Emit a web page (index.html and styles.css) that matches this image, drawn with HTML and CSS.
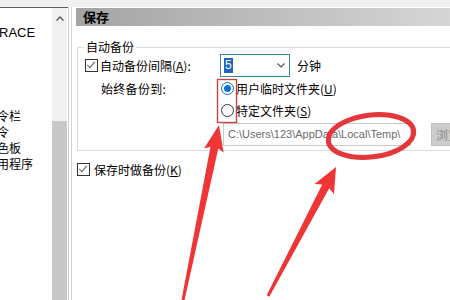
FILE: index.html
```html
<!DOCTYPE html>
<html>
<head>
    <meta charset="utf-8">
    <title>选项 - 保存</title>
    <link rel="stylesheet" href="styles.css">
</head>
<body>
    <div class="window">
        <div class="tree">
            <div class="tree-list">
                <div class="tree-item tree-item-first">RACE</div>
                <div class="tree-item"></div>
                <div class="tree-item"></div>
                <div class="tree-item"></div>
                <div class="tree-item tree-gap"></div>
                <div class="tree-item">令栏</div>
                <div class="tree-item">令</div>
                <div class="tree-item">色板</div>
                <div class="tree-item">用程序</div>
            </div>
            <div class="scrollbar">
                <div class="scroll-up">
                    <svg width="8" height="5" viewBox="0 0 8 5"><path d="M0.5 4.5 L4 1 L7.5 4.5" fill="none" stroke="#555" stroke-width="1.3"/></svg>
                </div>
                <div class="scroll-thumb"></div>
            </div>
        </div>
        <div class="divider"></div>

        <div class="page">
            <div class="page-title">保存</div>

            <div class="group">
                <div class="group-title">自动备份</div>
                <div class="group-grid">
                    <label class="check">
                        <span class="checkbox checked"></span>
                        <span>自动备份间隔(<u>A</u>):</span>
                    </label>
                    <div class="combo-row">
                        <div class="combo">
                            <span class="combo-value">5</span>
                            <svg class="combo-arrow" width="8" height="5" viewBox="0 0 8 5"><path d="M0.5 0.5 L4 4 L7.5 0.5" fill="none" stroke="#555" stroke-width="1.2"/></svg>
                        </div>
                        <span class="unit">分钟</span>
                    </div>

                    <div class="field-label">始终备份到:</div>
                    <label class="radio-row">
                        <span class="radio selected"></span>
                        <span>用户临时文件夹(<u>U</u>)</span>
                    </label>

                    <div></div>
                    <label class="radio-row">
                        <span class="radio"></span>
                        <span>特定文件夹(<u>S</u>)</span>
                    </label>

                    <div></div>
                    <div class="path-row">
                        <div class="path-box">C:\Users\123\AppData\Local\Temp\</div>
                        <button class="browse" disabled>浏览...</button>
                    </div>
                </div>
            </div>

            <label class="check save-check">
                <span class="checkbox checked"></span>
                <span>保存时做备份(<u>K</u>)</span>
            </label>
        </div>

        <!-- red annotations drawn on top of the screenshot -->
        <svg class="marks" width="450" height="300" viewBox="0 0 450 300">
            <rect x="217.5" y="79.5" width="19" height="43" fill="none" stroke="#c8453f" stroke-width="1.4"/>
            <ellipse cx="371" cy="136" rx="43" ry="21" transform="rotate(-7 371 136)" fill="none" stroke="#e5373b" stroke-width="5"/>
            <polygon points="219,125 223.6,152.5 218.3,148.4 184.5,300.3 181.5,299.7 210.5,146.8 204,148.5" fill="#ef3535"/>
            <polygon points="336,167 334,194.2 329.2,188.3 269.3,296.7 266.7,295.3 322.2,184.5 314.6,184" fill="#ef3535"/>
        </svg>
    </div>
</body>
</html>
```

FILE: styles.css
```css
/* General */
body, html {
    margin: 0;
    padding: 0;
    width: 450px;
    height: 300px;
    overflow: hidden;
    background-color: #f0f0f0;
    font-family: 'Noto Sans CJK SC', 'Noto Sans', sans-serif;
    font-size: 12px;
    color: #000000;
}
u {
    text-decoration: underline;
    text-underline-offset: 1px;
}
/* Window */
.window {
    position: relative;
    display: flex;
    height: 293px;
    margin-top: 7px;
}
/* Left tree with scrollbar */
.tree {
    display: flex;
    flex-shrink: 0;
    width: 68px;
    border-top: 1px solid #5c5c5c;
    background-color: #ffffff;
}
.tree-list {
    width: 52px;
    overflow: hidden;
    padding-top: 17px;
}
.tree-item {
    height: 16px;
    line-height: 16px;
    white-space: nowrap;
    margin-left: -3px;
}
.tree-gap {
    height: 19px;
}
.tree-item-first {
    margin-left: -1px;
    font-family: 'Liberation Sans', sans-serif;
    font-size: 13px;
}
.scrollbar {
    width: 15px;
    flex-shrink: 0;
    display: flex;
    flex-direction: column;
    background-color: #f0f0f0;
}
.scroll-up {
    height: 20px;
    display: flex;
    justify-content: center;
    align-items: center;
}
.scroll-thumb {
    margin-top: 93px;
    flex: 1;
    background-color: #c8c8c8;
}
.divider {
    flex-shrink: 0;
    width: 2px;
    border-left: 1px solid #cfcfcf;
    background-color: #ffffff;
}
/* Right page */
.page {
    flex: 1;
    min-width: 0;
    overflow: hidden;
    border-left: 1px solid #d4d4d4;
    background-color: #ffffff;
    padding-left: 4px;
}
.page-title {
    height: 18px;
    line-height: 18px;
    padding-left: 7px;
    margin-top: 1px;
    font-size: 13px;
    font-weight: bold;
    background: linear-gradient(to right, #a4a4a4, #d6d6d6);
}
/* Group box */
.group {
    margin-top: 21px;
    margin-left: 1px;
    border: 1px solid #dcdcdc;
    border-right: none;
    padding: 0 0 7px 7px;
}
.group-title {
    width: fit-content;
    height: 16px;
    line-height: 16px;
    margin: -9px 0 -1px -1px;
    padding: 0 2px;
    background-color: #ffffff;
}
.group-grid {
    display: grid;
    grid-template-columns: 135px 1fr;
    grid-auto-rows: 22px;
    grid-template-rows: 23px;
    align-items: center;
}
.check, .radio-row {
    display: flex;
    align-items: center;
    gap: 2px;
    white-space: nowrap;
}
.checkbox {
    width: 11px;
    height: 11px;
    border: 1px solid #333333;
    background-color: #ffffff;
    position: relative;
}
.checkbox.checked::after {
    content: '';
    position: absolute;
    left: 3px;
    top: 0px;
    width: 3px;
    height: 7px;
    border: solid #555555;
    border-width: 0 1.5px 1.5px 0;
    transform: rotate(40deg);
}
.field-label {
    padding-left: 16px;
    letter-spacing: 0.3px;
}
.combo-row {
    display: flex;
    align-items: center;
    gap: 7px;
}
.combo {
    width: 61px;
    height: 21px;
    border: 1px solid #3a88a8;
    display: flex;
    align-items: center;
    justify-content: space-between;
    padding: 0 4px 0 3px;
}
.combo-value {
    background-color: #1f63be;
    color: #ffffff;
    height: 15px;
    line-height: 15px;
    padding: 0 1px;
    font-family: 'Liberation Sans', sans-serif;
}
.radio {
    width: 11px;
    height: 11px;
    border: 1px solid #333333;
    border-radius: 50%;
    margin-left: 1px;
    position: relative;
}
.radio.selected {
    border-color: #0a72d1;
}
.radio.selected::after {
    content: '';
    position: absolute;
    left: 2px;
    top: 2px;
    width: 7px;
    height: 7px;
    border-radius: 50%;
    background-color: #0a72d1;
}
.path-row {
    display: flex;
    align-items: center;
    gap: 20px;
    margin-top: 4px;
    padding-left: 3px;
}
.path-box {
    flex-shrink: 0;
    width: 182px;
    height: 21px;
    line-height: 21px;
    border: 1px solid #c9c9c9;
    padding-left: 4px;
    color: #6b6b6b;
    font-family: 'Liberation Sans', sans-serif;
    font-size: 11px;
    white-space: nowrap;
    overflow: hidden;
}
.browse {
    flex-shrink: 0;
    height: 23px;
    width: 60px;
    margin: 0;
    border: 1px solid #bfbfbf;
    background-color: #cccccc;
    color: #8a8a8a;
    font-family: 'Noto Sans CJK SC', sans-serif;
    font-size: 12px;
    text-align: left;
    padding: 0 4px;
}
.save-check {
    margin-top: 10px;
    margin-left: 1px;
    gap: 4px;
    height: 16px;
}
/* Annotations */
.marks {
    position: absolute;
    left: 0;
    top: -7px;
    pointer-events: none;
}
```
